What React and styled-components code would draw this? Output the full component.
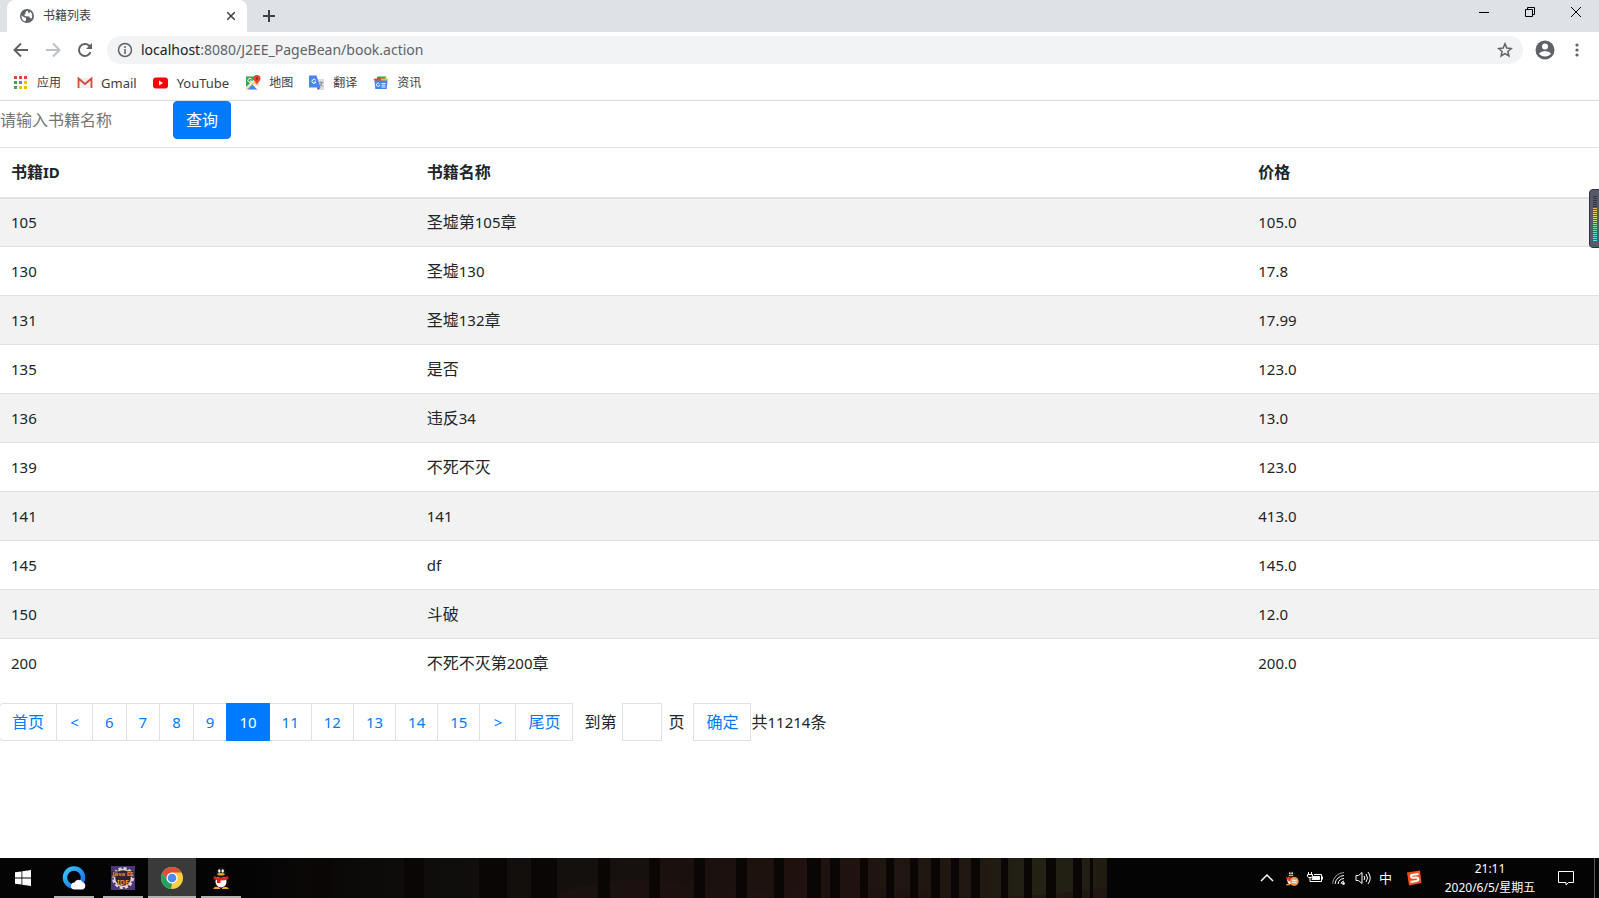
import React, { Fragment, useState } from "react";
import styled, { createGlobalStyle, css } from "styled-components";

const books = [
    { id: 105, name: "圣墟第105章", price: "105.0" },
    { id: 130, name: "圣墟130", price: "17.8" },
    { id: 131, name: "圣墟132章", price: "17.99" },
    { id: 135, name: "是否", price: "123.0" },
    { id: 136, name: "违反34", price: "13.0" },
    { id: 139, name: "不死不灭", price: "123.0" },
    { id: 141, name: "141", price: "413.0" },
    { id: 145, name: "df", price: "145.0" },
    { id: 150, name: "斗破", price: "12.0" },
    { id: 200, name: "不死不灭第200章", price: "200.0" },
];

const pages = [6, 7, 8, 9, 10, 11, 12, 13, 14, 15];

const GlobalStyle = createGlobalStyle`
    * {
        box-sizing: border-box;
    }
    body {
        margin: 0;
        background: #fff;
        color: #212529;
        font-family: "Noto Sans", "Noto Sans CJK SC", sans-serif;
        font-size: 16px;
        line-height: 24px;
    }
    button, input {
        font: inherit;
        margin: 0;
    }
    svg {
        display: block;
        flex: none;
    }
`;

const Screen = styled.div`
    min-height: 100vh;
    display: flex;
    flex-direction: column;
`;

/* browser */

const TabStrip = styled.div`
    height: 32px;
    background: #dee1e6;
    display: flex;
    align-items: stretch;
    padding-left: 7px;
`;

const Tab = styled.div`
    width: 240px;
    background: #fff;
    border-radius: 8px 8px 0 0;
    display: flex;
    align-items: center;
    gap: 8px;
    padding: 0 12px;
    font-size: 12px;
    line-height: 16px;
    color: #3c4043;
`;

const TabTitle = styled.span`
    flex: 1;
`;

const IconButton = styled.button`
    border: 0;
    padding: 0;
    background: none;
    color: ${props => props.$color || "#5f6368"};
    width: ${props => props.$width || 32}px;
    display: flex;
    align-items: center;
    justify-content: center;
    cursor: pointer;
`;

const WindowButtons = styled.div`
    margin-left: auto;
    height: 24px;
    display: flex;
`;

const Toolbar = styled.div`
    height: 36px;
    display: flex;
    align-items: center;
    padding: 0 6px 0 5px;
`;

const AddressBar = styled.div`
    flex: 1;
    height: 28px;
    margin: 0 6px;
    padding: 0 10px;
    border-radius: 14px;
    background: #f1f3f4;
    color: #5f6368;
    display: flex;
    align-items: center;
    gap: 8px;
    font-size: 14px;
    line-height: 20px;
`;

const Address = styled.span`
    flex: 1;
    b {
        font-weight: 400;
        color: #202124;
    }
`;

const BookmarkBar = styled.nav`
    height: 33px;
    border-bottom: 1px solid #dadce0;
    display: flex;
    align-items: center;
    gap: 16px;
    padding: 0 13px 2px;
`;

const Bookmark = styled.a`
    display: flex;
    align-items: center;
    gap: 8px;
    color: #3c4043;
    font-size: ${props => props.$latin ? 13 : 12}px;
    line-height: 16px;
    text-decoration: none;
`;

/* page */

const Page = styled.main`
    flex: 1;
`;

const SearchForm = styled.form`
    display: flex;
    margin-bottom: 8px;
`;

const SearchInput = styled.input`
    width: 173px;
    border: 0;
    padding: 0;
    outline: none;
    &::placeholder {
        color: #757575;
    }
`;

const PrimaryButton = styled.button`
    height: 38px;
    padding: 0 12px;
    border: 1px solid #007bff;
    border-radius: 4px;
    background: #007bff;
    color: #fff;
    cursor: pointer;
`;

const Table = styled.table`
    width: 100%;
    table-layout: fixed;
    border-collapse: collapse;
    margin-bottom: 15px;
    th, td {
        height: 49px;
        padding: 0 11px;
        border-top: 1px solid #dee2e6;
        text-align: left;
    }
    th {
        height: 50px;
        border-bottom: 2px solid #dee2e6;
    }
    tbody tr:nth-of-type(odd) {
        background: #f2f2f2;
    }
`;

const Col = styled.col`
    width: ${props => props.$width}%;
`;

const Small = styled.span`
    font-size: 15px;
`;

const Pager = styled.form`
    display: flex;
    align-items: center;
`;

const PageList = styled.ul`
    display: flex;
    list-style: none;
    margin: 0 11px 0 0;
    padding: 0;
    li {
        margin-left: -1px;
    }
`;

const box = css`
    height: 38px;
    border: 1px solid #dee2e6;
    background: #fff;
    color: #007bff;
`;

const PageLink = styled.a`
    ${box}
    display: flex;
    align-items: center;
    justify-content: center;
    padding: 0 12px;
    min-width: ${props => props.$arrow ? 37 : 0}px;
    font-size: ${props => props.$text ? 16 : 15}px;
    border-radius: ${props => props.$first ? "4px 0 0 4px" : 0};
    text-decoration: none;
    ${props => props.$active && css`
        position: relative;
        border-color: #007bff;
        background: #007bff;
        color: #fff;
    `}
`;

const PageInput = styled.input`
    ${box}
    width: 40px;
    margin: 0 6px;
    padding: 0 4px;
`;

const GoButton = styled.button`
    ${box}
    margin-left: 9px;
    padding: 0 12px;
    cursor: pointer;
`;

/* desktop */

const Meter = styled.div`
    position: fixed;
    right: 0;
    top: 189px;
`;

const Taskbar = styled.footer`
    position: relative;
    height: 40px;
    background: #050404;
    color: #fff;
    display: flex;
    isolation: isolate;
`;

const Wallpaper = styled.div`
    position: absolute;
    inset: 0;
    z-index: -1;
    svg {
        width: 100%;
        height: 100%;
    }
`;

const TaskButton = styled.button`
    width: 48px;
    margin-right: 1px;
    padding: 0;
    border: 0;
    background: ${props => props.$active ? "#3a3a3a" : "none"};
    display: flex;
    flex-direction: column;
    align-items: center;
    justify-content: space-between;
    &:first-of-type {
        width: 46px;
        margin-right: 4px;
    }
    &::before {
        content: "";
        height: 2px;
    }
    &::after {
        content: "";
        width: ${props => props.$active ? 48 : 40}px;
        height: 2px;
        background: ${props => props.$open ? "#b4b2b0" : "none"};
    }
`;

const Tray = styled.div`
    margin-left: auto;
    display: flex;
    align-items: center;
    gap: 8px;
    font-size: 13px;
    line-height: 16px;
`;

const InputMode = styled.span`
    padding-right: 6px;
`;

const Clock = styled.div`
    width: 120px;
    text-align: center;
    font-size: 12px;
    line-height: 19px;
`;

const ShowDesktop = styled.button`
    width: 5px;
    height: 40px;
    margin-left: 12px;
    padding: 0;
    border: 0;
    border-left: 1px solid #5a5a5a;
    background: none;
`;

const Stroke = ({ d, size = 16, width = 1 }) => (
    <svg width={size} height={size} viewBox={`0 0 ${size} ${size}`} fill="none" stroke="currentColor" strokeWidth={width}>
        <path d={d} />
    </svg>
);

const GlobeIcon = () => (
    <svg width="16" height="16" viewBox="0 0 16 16">
        <circle cx="8" cy="8" r="7" fill="#5f6368" />
        <path d="M2.500 7.200 5 9.300l2 .5v2.600l-1.200 1C3.600 12.500 2.300 10.200 2.500 7.200zM8.500 2.500 6.300 4.200l.3 1.700-1.800 1 2 1.300 3.300.2 1.200 1.800 1.300.4c1.200-2.600.8-5.200-1.200-6.900L9.800 5.500z" fill="#fff" />
    </svg>
);

const Squares = () => {
    const colors = ["#ea4335", "#ea4335", "#ea4335", "#34a853", "#4285f4", "#fbbc05", "#34a853", "#fbbc05", "#fbbc05"];
    return (
        <svg width="16" height="16" viewBox="0 0 16 16">
            {colors.map((c, i) => <rect key={i} x={1 + i % 3 * 5} y={1 + Math.floor(i / 3) * 5} width="3" height="3" fill={c} />)}
        </svg>
    );
};

const GmailIcon = () => (
    <svg width="16" height="16" viewBox="0 0 16 16">
        <path d="M1 3h14v10H1z" fill="#eee" />
        <path d="M1.500 13V3.500L8 9l6.500-5.500V13" fill="none" stroke="#d54b3d" strokeWidth="1.800" />
    </svg>
);

const YouTubeIcon = () => (
    <svg width="16" height="16" viewBox="0 0 16 16">
        <rect x="0" y="2.500" width="15" height="11" rx="3" fill="#f00" />
        <path d="M6 5.600v4.800L10 8z" fill="#fff" />
    </svg>
);

const MapsIcon = () => (
    <svg width="16" height="16" viewBox="0 0 16 16">
        <path d="M1 1.500h13v13H1z" fill="#e8e8e8" />
        <path d="M1 1.500h11L1 12z" fill="#34a853" />
        <path d="M1 14.500 12 4l2 2-5 8z" fill="#fbd04a" />
        <path d="m2.500 14.500 5-5 5 5z" fill="#4285f4" />
        <path d="m8 10 1.500-1.500L14 13v1.500h-1.500z" fill="#fff" />
        <path d="M12 0a3.500 3.500 0 0 1 3.500 3.500C15.500 6 13 6.500 12 10c-1-3.500-3.500-4-3.500-6.500A3.500 3.500 0 0 1 12 0z" fill="#ea4335" />
        <circle cx="12" cy="3.500" r="1.200" fill="#8c2f26" />
        <path d="M6.500 4.200a2 2 0 1 0 .3 1.800H5" fill="none" stroke="#fff" />
    </svg>
);

const TranslateIcon = () => (
    <svg width="16" height="16" viewBox="0 0 16 16">
        <path d="M6 4h9v11H9z" fill="#dcdcdc" />
        <path d="M0 .5h7.500l4 12H0z" fill="#4a86f0" />
        <path d="m8 12.500 1 2.500 2.500-2.500z" fill="#2a56c6" />
        <path d="M6.700 5.200a2 2 0 1 0 .2 1.800H5.200" fill="none" stroke="#fff" />
        <path d="M10.500 7.500H14M12 6.500v1M13.200 7.500 11 11M11 8.500l2.500 3" fill="none" stroke="#7a8791" strokeWidth=".8" />
    </svg>
);

const NewsIcon = () => (
    <svg width="16" height="16" viewBox="0 0 16 16">
        <path d="M4 1.500h9l-1 4H4z" fill="#34a853" />
        <path d="m.5 4 8-1.500v4H2z" fill="#ea4335" />
        <path d="M8 3.500h7l-1 4H8z" fill="#fbbc05" />
        <path d="M1.500 5.500h13l-.8 8.500H2.300z" fill="#4285f4" />
        <path d="M6.500 8.700a1.700 1.700 0 1 0 .3 1.500H5.500M8.500 8.500h4M8.500 10.200h4M8.500 12h4" fill="none" stroke="#fff" strokeWidth=".9" />
    </svg>
);

const WindowsIcon = () => (
    <svg width="16" height="16" viewBox="0 0 16 16" fill="#fff">
        <path d="M0 2.300 6.500 1.400V7.600H0zM7.300 1.300 16 0v7.600H7.300zM0 8.400h6.500v6.200L0 13.700zM7.300 8.400H16V16l-8.700-1.300z" />
    </svg>
);

const BrowserIcon = () => (
    <svg width="24" height="24" viewBox="0 0 24 24">
        <defs>
            <linearGradient id="ring" x1="0" y1="0" x2="1" y2="1">
                <stop offset="0" stopColor="#35c8ff" />
                <stop offset="1" stopColor="#1668f0" />
            </linearGradient>
        </defs>
        <circle cx="12" cy="11.500" r="9" fill="none" stroke="url(#ring)" strokeWidth="4.500" />
        <path d="M12.500 23.500a3.500 3.500 0 0 1 0-7 4.500 4.500 0 0 1 8-.5 4 4 0 0 1 .5 7.500z" fill="#fff" />
    </svg>
);

const EclipseIcon = () => (
    <svg width="24" height="24" viewBox="0 0 24 24">
        <rect width="24" height="24" fill="#4c3675" />
        <circle cx="12" cy="12" r="9.500" fill="none" stroke="#d8d4d2" strokeWidth="3" strokeDasharray="3 2" />
        <circle cx="12" cy="12" r="8.500" fill="#2c2431" stroke="#d8d4d2" strokeWidth="1.500" />
        <rect y="5" width="24" height="6" fill="#332638" opacity=".7" />
        <text x="12" y="10" fontSize="6" fontWeight="700" textAnchor="middle" fill="#f08a2c">Java EE</text>
        <text x="12" y="19" fontSize="7" fontWeight="700" textAnchor="middle" fill="#f08a2c">IDE</text>
    </svg>
);

const ChromeIcon = () => (
    <svg width="24" height="24" viewBox="0 0 24 24">
        <circle cx="12" cy="12" r="11" fill="#ffcd40" />
        <path d="M12 6.500h9.500A11 11 0 0 0 2.500 6.500L7 14.500z" fill="#de4b3f" />
        <path d="M2.500 6.500 7.200 14.700 12 17.500 11 23A11 11 0 0 1 2.500 6.500z" fill="#1da462" />
        <circle cx="12" cy="12" r="5.500" fill="#fff" />
        <circle cx="12" cy="12" r="4.300" fill="#4a8af4" />
    </svg>
);

const PenguinIcon = ({ size = 24, busy }) => (
    <svg width={size} height={size} viewBox="0 0 24 24">
        <ellipse cx="12" cy="14" rx="8" ry="7.500" fill="#0b0b0b" />
        <ellipse cx="12" cy="15.500" rx="5.500" ry="6" fill="#fff" />
        <ellipse cx="12" cy="6.500" rx="5" ry="5.500" fill="#151515" />
        <ellipse cx="10.300" cy="5" rx="1.200" ry="1.700" fill="#fff" />
        <ellipse cx="13.700" cy="5" rx="1.200" ry="1.700" fill="#fff" />
        <ellipse cx="12" cy="8.300" rx="3.700" ry="1.200" fill="#f5a31a" />
        <path d="M5 10q7 3 14 0l.5 3q-4 1.500-8 1.500V17H8v-3l-3.500-1z" fill="#e3201b" />
        <path d="M4.500 22q3-2.500 6.500 0v1h-6.500zM13 22q3-2.500 6.500 0v1H13z" fill="#f5a31a" />
        {busy && <circle cx="17" cy="17" r="6.500" fill="#f49a56" />}
        {busy && <path d="M13.500 15.500h7M13.500 18.500h7" stroke="#fff" strokeWidth="1.500" />}
    </svg>
);

const BatteryIcon = () => (
    <svg width="16" height="16" viewBox="0 0 16 16" fill="none" stroke="#fff">
        <path d="M1.500 2v2M4.500 2v2M.5 4.500h5v2l-1.500 1H2l-1.500-1zM3 7.500v4h11.500v-7H7M15.500 6.500v3" />
        <path d="M6 6.500h6.500v3H5z" fill="#fff" />
    </svg>
);

const WifiIcon = () => (
    <svg width="16" height="16" viewBox="0 0 16 16" fill="none" stroke="#fff">
        <path d="M1.500 13.500A12 12 0 0 1 13 2.500" opacity=".6" />
        <path d="M4 14a9.500 9.500 0 0 1 9-8.500M7 14a6.500 6.500 0 0 1 6-5.500M10 14a3.500 3.500 0 0 1 3-3" />
        <circle cx="12.500" cy="13.500" r="1" fill="#fff" />
    </svg>
);

const SogouIcon = () => (
    <svg width="16" height="16" viewBox="0 0 16 16">
        <path d="M1 2.500 14 .5l1.500 12.500L3 15.500z" fill="#f4511e" />
        <path d="M12.500 4 7 4.700Q4.800 5 5 6.400t2.200 1.400l3-.2q2-.1 2.100 1.400t-1.900 2L4.500 12" fill="none" stroke="#fff" strokeWidth="2" />
    </svg>
);

const LevelMeter = () => {
    const colors = ["#33363f", "#33363f", "#33363f", "#33363f", "#33363f", "#33363f", "#f2b04e", "#f0c14e", "#eecd52", "#e6d958", "#dae05c", "#c8e264", "#b4e36c", "#a2e278", "#90e287", "#80e297", "#70e2a8", "#64e3b8", "#58e4c6", "#50e6d0", "#4ce8da", "#48e9e0", "#44eae4"];
    return (
        <svg width="10" height="59" viewBox="0 0 10 59">
            <path d="M12 .5H4Q.5.500.5 4v51q0 3.500 3.500 3.500h8z" fill="#565a6a" stroke="#30333c" />
            {colors.map((c, i) => <rect key={i} x="4" y={7 + i * 2} width="4" height="1" fill={c} />)}
        </svg>
    );
};

// fence slats behind the taskbar: [x, width]
const slats = [[310, 22], [404, 20], [479, 28], [531, 26], [598, 12], [649, 11], [694, 11], [736, 11], [774, 10], [807, 14], [830, 10], [860, 8], [886, 8], [910, 8], [931, 9], [951, 8], [971, 9], [1001, 7], [1024, 8], [1046, 10], [1073, 9], [1090, 3]];

const Fence = () => (
    <svg viewBox="0 0 1599 40" preserveAspectRatio="none">
        <defs>
            <linearGradient id="dusk">
                <stop offset="0" stopColor="#050404" />
                <stop offset=".2" stopColor="#0f0d0b" />
                <stop offset=".4" stopColor="#14100e" />
                <stop offset=".65" stopColor="#20120e" />
                <stop offset=".85" stopColor="#201811" />
                <stop offset=".92" stopColor="#232315" />
                <stop offset="1" stopColor="#211b12" />
            </linearGradient>
        </defs>
        <rect x="240" width="867" height="40" fill="url(#dusk)" />
        <path d="M560 34q70-20 120-8t120 6 120 4 187-6v10H560z" fill="#201212" opacity=".6" />
        {slats.map(([x, w]) => <rect key={x} x={x} width={w} height="40" fill="#0a0605" />)}
    </svg>
);

// latin runs are set one step smaller than the Chinese text beside them
const Mixed = ({ text }) => String(text).split(/([\x20-\x7e]+)/).map((part, i) => (
    i % 2 ? <Small key={i}>{part}</Small> : <Fragment key={i}>{part}</Fragment>
));

export default function App() {
    const [current, setCurrent] = useState(10);
    const [keyword, setKeyword] = useState("");
    const [target, setTarget] = useState("");

    const go = (e, page) => {
        e.preventDefault();
        if (page > 0) setCurrent(page);
    };

    return (
        <Screen>
            <GlobalStyle />
            <TabStrip>
                <Tab>
                    <GlobeIcon />
                    <TabTitle>书籍列表</TabTitle>
                    <IconButton $width={8} $color="#3c4043" aria-label="关闭标签页">
                        <Stroke size={8} width={1.5} d="M0 0l8 8M8 0 0 8" />
                    </IconButton>
                </Tab>
                <IconButton $width={44} $color="#3c4043" aria-label="新标签页">
                    <Stroke size={12} width={2} d="M6 0v12M0 6h12" />
                </IconButton>
                <WindowButtons>
                    <IconButton $width={46} $color="#000" aria-label="最小化"><Stroke size={10} d="M0 5.500h10" /></IconButton>
                    <IconButton $width={46} $color="#000" aria-label="还原"><Stroke size={10} d="M.5 2.500h7v7h-7zM2.500 2.500v-2h7v7h-2" /></IconButton>
                    <IconButton $width={46} $color="#000" aria-label="关闭"><Stroke size={10} d="M0 0l10 10M10 0 0 10" /></IconButton>
                </WindowButtons>
            </TabStrip>
            <Toolbar>
                <IconButton aria-label="后退"><Stroke width={2} d="M15 8H2M8 1.500 1.500 8 8 14.500" /></IconButton>
                <IconButton $color="#bdc1c6" aria-label="前进"><Stroke width={2} d="M1 8h13M8 1.500 14.500 8 8 14.500" /></IconButton>
                <IconButton aria-label="重新加载">
                    <svg width="16" height="16" viewBox="0 0 16 16">
                        <path d="M13.500 10.200A6 6 0 1 1 12.200 3.700L14 5.500" fill="none" stroke="currentColor" strokeWidth="2" />
                        <path d="M15 1v6H9z" fill="currentColor" />
                    </svg>
                </IconButton>
                <AddressBar>
                    <Stroke width={1.5} d="M8 1.500a6.500 6.500 0 1 0 0 13 6.500 6.500 0 0 0 0-13zM8 7v5M8 4v2" />
                    <Address><b>localhost</b>:8080/J2EE_PageBean/book.action</Address>
                    <Stroke width={1.5} d="m8 1.800 1.800 4.300 4.600.4-3.500 3 1 4.500L8 11.600 4.100 14l1-4.500-3.500-3 4.600-.4z" />
                </AddressBar>
                <IconButton aria-label="用户">
                    <svg width="20" height="20" viewBox="0 0 20 20">
                        <circle cx="10" cy="10" r="9.500" fill="currentColor" />
                        <circle cx="10" cy="6.500" r="3" fill="#fff" />
                        <path d="M4 13.500q2-2.500 6-2.500t6 2.500Q14 16.500 10 16.500T4 13.500z" fill="#fff" />
                    </svg>
                </IconButton>
                <IconButton aria-label="菜单">
                    <svg width="16" height="16" viewBox="0 0 16 16" fill="currentColor">
                        <circle cx="8" cy="3" r="1.600" /><circle cx="8" cy="8" r="1.600" /><circle cx="8" cy="13" r="1.600" />
                    </svg>
                </IconButton>
            </Toolbar>
            <BookmarkBar>
                <Bookmark href="#"><Squares />应用</Bookmark>
                <Bookmark href="#" $latin><GmailIcon />Gmail</Bookmark>
                <Bookmark href="#" $latin><YouTubeIcon />YouTube</Bookmark>
                <Bookmark href="#"><MapsIcon />地图</Bookmark>
                <Bookmark href="#"><TranslateIcon />翻译</Bookmark>
                <Bookmark href="#"><NewsIcon />资讯</Bookmark>
            </BookmarkBar>

            <Page>
                <SearchForm onSubmit={e => e.preventDefault()}>
                    <SearchInput aria-label="书籍名称" placeholder="请输入书籍名称" value={keyword} onChange={e => setKeyword(e.target.value)} />
                    <PrimaryButton>查询</PrimaryButton>
                </SearchForm>
                <Table>
                    <colgroup>
                        <Col $width={26} />
                        <Col $width={52} />
                        <Col $width={22} />
                    </colgroup>
                    <thead>
                        <tr>
                            <th><Mixed text="书籍ID" /></th>
                            <th>书籍名称</th>
                            <th>价格</th>
                        </tr>
                    </thead>
                    <tbody>
                        {books.map(book => (
                            <tr key={book.id}>
                                <td><Mixed text={book.id} /></td>
                                <td><Mixed text={book.name} /></td>
                                <td><Mixed text={book.price} /></td>
                            </tr>
                        ))}
                    </tbody>
                </Table>
                <Pager onSubmit={e => go(e, Number(target))}>
                    <PageList>
                        <li><PageLink href="#" $text $first onClick={e => go(e, 1)}>首页</PageLink></li>
                        <li><PageLink href="#" $arrow onClick={e => go(e, current - 1)}>&lt;</PageLink></li>
                        {pages.map(page => (
                            <li key={page}>
                                <PageLink href="#" $active={page === current} onClick={e => go(e, page)}>{page}</PageLink>
                            </li>
                        ))}
                        <li><PageLink href="#" $arrow onClick={e => go(e, current + 1)}>&gt;</PageLink></li>
                        <li><PageLink href="#" $text onClick={e => go(e, 1122)}>尾页</PageLink></li>
                    </PageList>
                    <label htmlFor="target">到第</label>
                    <PageInput id="target" value={target} onChange={e => setTarget(e.target.value)} />
                    <span>页</span>
                    <GoButton>确定</GoButton>
                    <span><Mixed text="共11214条" /></span>
                </Pager>
            </Page>

            <Meter><LevelMeter /></Meter>

            <Taskbar>
                <Wallpaper><Fence /></Wallpaper>
                <TaskButton aria-label="开始"><WindowsIcon /></TaskButton>
                <TaskButton $open aria-label="QQ浏览器"><BrowserIcon /></TaskButton>
                <TaskButton $open aria-label="Eclipse"><EclipseIcon /></TaskButton>
                <TaskButton $open $active aria-label="Chrome"><ChromeIcon /></TaskButton>
                <TaskButton $open aria-label="QQ"><PenguinIcon /></TaskButton>
                <Tray>
                    <Stroke width={1.5} d="M2 11l6-6 6 6" />
                    <PenguinIcon size={16} busy />
                    <BatteryIcon />
                    <WifiIcon />
                    <Stroke d="M1 5.500h2.500l3.500-3v11l-3.500-3H1zM9 6q1.500 2 0 4M11 4q3 4 0 8M13 2q4.500 6 0 12" />
                    <InputMode>中</InputMode>
                    <SogouIcon />
                    <Clock>21:11<br />2020/6/5/星期五</Clock>
                    <Stroke d="M.5 1.500h15v11h-5l-2.500 2.500v-2.500H.5z" />
                    <ShowDesktop aria-label="显示桌面" />
                </Tray>
            </Taskbar>
        </Screen>
    );
}
